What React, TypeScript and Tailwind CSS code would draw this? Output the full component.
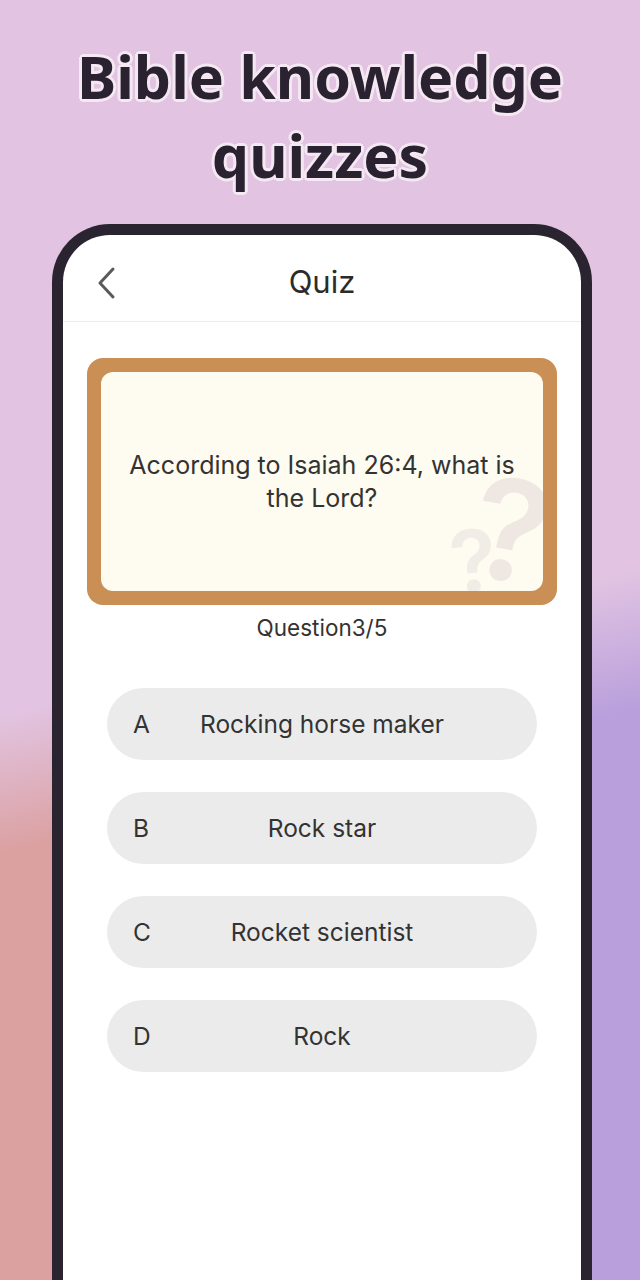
const options = [
  { key: 'A', label: 'Rocking horse maker' },
  { key: 'B', label: 'Rock star' },
  { key: 'C', label: 'Rocket scientist' },
  { key: 'D', label: 'Rock' },
]

function BackIcon() {
  return (
    <svg width="22" height="34" viewBox="0 0 22 34" fill="none">
      <path d="M17 3 L4 17 L17 31" stroke="#5a5a5a" strokeWidth="3" strokeLinecap="round" strokeLinejoin="round" />
    </svg>
  )
}

export default function App() {
  return (
    <div className="h-[1280px] w-[640px] overflow-hidden bg-[linear-gradient(167deg,#e2c4e2_50%,rgba(226,196,226,0)_60%),linear-gradient(90deg,#dba0a0_8%,#b99fdc_92%)] font-['Inter',sans-serif]">
      <h1 className="pt-[37px] text-center font-['Noto_Sans',sans-serif] text-[59px] leading-[79px] font-bold text-[#2a2230] [text-shadow:0_0_3px_#f4e8f2,2px_2px_0_#f4e8f2,-2px_-2px_0_#f4e8f2,2px_-2px_0_#f4e8f2,-2px_2px_0_#f4e8f2,0_3px_0_#f4e8f2,0_-3px_0_#f4e8f2,3px_0_0_#f4e8f2,-3px_0_0_#f4e8f2]">
        Bible knowledge
        <br />
        quizzes
      </h1>

      <div className="ml-[52px] mt-[29px] h-[1100px] w-[540px] rounded-t-[58px] border-[11px] border-b-0 border-[#2a2430] bg-white">
        <div className="relative flex h-[87px] items-center justify-center border-b border-[#ececec] pt-[8px]">
          <div className="absolute left-[33px] top-[31px]">
            <BackIcon />
          </div>
          <span className="text-[31px] text-[#2b2b2b]">Quiz</span>
        </div>

        <div className="mx-[24px] mt-[36px] rounded-[16px] bg-[#c98f55] p-[14px]">
          <div className="relative flex h-[219px] items-center justify-center overflow-hidden rounded-[12px] bg-[#fefbf1] px-4">
            <span className="absolute right-[-6px] top-[88px] rotate-[10deg] text-[140px] leading-none font-semibold text-[#efe8e2]">?</span>
            <span className="absolute right-[46px] top-[146px] -rotate-[6deg] text-[86px] leading-none font-semibold text-[#f2ece6]">?</span>
            <p className="relative text-center text-[25px] leading-[33px] text-[#333]">
              According to Isaiah 26:4, what is
              <br />
              the Lord?
            </p>
          </div>
        </div>

        <p className="mt-[9px] text-center text-[22.5px] leading-[28px] text-[#333]">Question3/5</p>

        <div className="mx-[44px] mt-[46px] flex flex-col gap-[32px]">
          {options.map((o) => (
            <div key={o.key} className="grid h-[72px] grid-cols-[40px_1fr_40px] items-center rounded-full bg-[#ebebeb] px-[26px] text-[24.5px] text-[#333]">
              <span>{o.key}</span>
              <span className="text-center">{o.label}</span>
              <span />
            </div>
          ))}
        </div>
      </div>
    </div>
  )
}
